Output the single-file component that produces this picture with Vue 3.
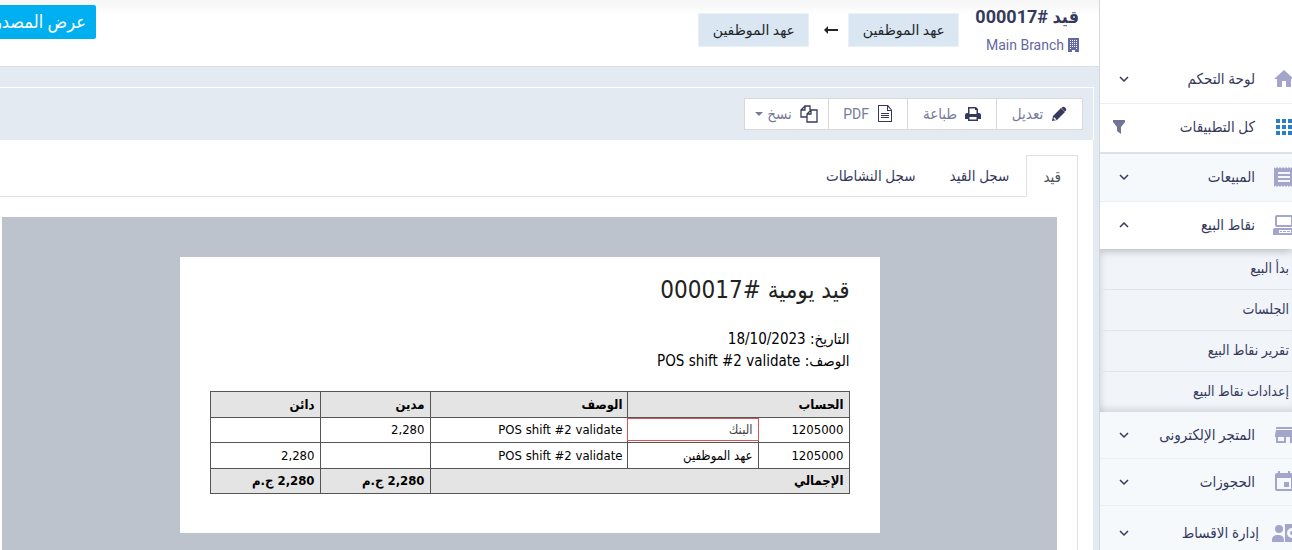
<script setup>
import { ref } from 'vue'

const activeTab = ref('entry')

const ICONS = {
  home: 'M10 20v-6h4v6h5v-8h3L12 3 2 12h3v8z',
  apps: 'M4 8h4V4H4zM10 8h4V4h-4zM16 8h4V4h-4zM4 14h4v-4H4zM10 14h4v-4h-4zM16 14h4v-4h-4zM4 20h4v-4H4zM10 20h4v-4h-4zM16 20h4v-4h-4z',
  receipt: 'M18 17H6v-2h12v2zm0-4H6v-2h12v2zm0-4H6V7h12v2zM2 22l1.500-1.500L5 22l1.500-1.500L8 22l1.500-1.500L11 22l1.500-1.500L14 22l1.500-1.500L17 22l1.500-1.500L20 22l1.500-1.500V3.500L20 2l-1.500 1.500L17 2l-1.500 1.500L14 2l-1.500 1.500L11 2 9.500 3.500 8 2 6.500 3.500 5 2 3.500 3.500 2 2z',
  pos: 'M5 2h14a2 2 0 0 1 2 2v8a2 2 0 0 1-2 2H5a2 2 0 0 1-2-2V4a2 2 0 0 1 2-2zm0 2v8h14V4zM3 15h18a2 2 0 0 1 2 2v5H1v-5a2 2 0 0 1 2-2zm4 2v3h12v-3zm1 1h2v1H8zm3 0h3v1h-3zm4 0h3v1h-3z',
  store: 'M20 4H4v2h16V4zm1 10v-2l-1-5H4l-1 5v2h1v6h10v-6h4v6h2v-6h1zm-9 4H6v-4h6v4z',
  event: 'M17 12h-5v5h5v-5zM16 1v2H8V1H6v2H5c-1.100 0-2 .9-2 2v14c0 1.100.9 2 2 2h14c1.100 0 2-.9 2-2V5c0-1.100-.9-2-2-2h-1V1h-2zm3 18H5V8h14v11z',
  installment: 'M7 4a4 4 0 1 1 0 8 4 4 0 0 1 0-8zM0 21v-2c0-4 3-5 6-5s6 1 6 5v2zM13 3h11v18H13zM20 7a5 5 0 1 0 0 10zm0 3a2 2 0 1 0 0 4z',
}

const topItems = [
  { label: 'لوحة التحكم', icon: 'home', side: 'down' },
  { label: 'كل التطبيقات', icon: 'apps', side: 'filter', kind: 'apps' },
  { label: 'المبيعات', icon: 'receipt', side: 'down', kind: 'tinted' },
  { label: 'نقاط البيع', icon: 'pos', side: 'up', kind: 'open' },
]

const subItems = ['بدأ البيع', 'الجلسات', 'تقرير نقاط البيع', 'إعدادات نقاط البيع']

const bottomItems = [
  { label: 'المتجر الإلكترونى', icon: 'store', side: 'down', kind: 'tinted' },
  { label: 'الحجوزات', icon: 'event', side: 'down', kind: 'tinted' },
  { label: 'إدارة الاقساط', icon: 'installment', side: 'down', kind: 'tinted tall' },
]

const SIDE_ICONS = {
  down: 'M4 6l4 4 4-4',
  up: 'M4 10l4-4 4 4',
}

const tabs = [
  { id: 'entry', label: 'قيد' },
  { id: 'log', label: 'سجل القيد' },
  { id: 'activity', label: 'سجل النشاطات' },
]

const rows = [
  { code: '1205000', account: 'البنك', desc: 'POS shift #2 validate', debit: '2,280', credit: '', marked: true },
  { code: '1205000', account: 'عهد الموظفين', desc: 'POS shift #2 validate', debit: '', credit: '2,280' },
]
</script>

<template>
  <div class="app" dir="rtl" lang="ar">
    <nav class="sidebar">
      <button v-for="item in topItems" :key="item.icon" type="button" class="nav-item" :class="item.kind">
        <svg class="nav-icon" viewBox="0 0 20 24"><path fill-rule="evenodd" :d="ICONS[item.icon]" /></svg>
        <span class="nav-label">{{ item.label }}</span>
        <svg v-if="item.side === 'filter'" class="filter" viewBox="0 0 12 14"><path d="M0 0h12v2L8 7v7l-4-3V7L0 2z" /></svg>
        <svg v-else class="chevron" viewBox="0 0 16 16"><path :d="SIDE_ICONS[item.side]" /></svg>
      </button>

      <div class="submenu">
        <a v-for="label in subItems" :key="label" href="#" class="sub-item">{{ label }}</a>
      </div>

      <button v-for="item in bottomItems" :key="item.icon" type="button" class="nav-item" :class="item.kind">
        <svg class="nav-icon" viewBox="0 0 20 24"><path fill-rule="evenodd" :d="ICONS[item.icon]" /></svg>
        <span class="nav-label">{{ item.label }}</span>
        <svg class="chevron" viewBox="0 0 16 16"><path :d="SIDE_ICONS[item.side]" /></svg>
      </button>
    </nav>

    <main class="main">
      <header class="page-head">
        <div class="title-block">
          <h1>قيد #000017</h1>
          <p class="branch">
            <svg class="building" viewBox="0 0 11 14">
              <path fill-rule="evenodd" d="M0 0h11v14H7v-2H4v2H0zM2 2v1h1V2zm2 0v1h1V2zm2 0v1h1V2zm2 0v1h1V2zM2 4v1h1V4zm2 0v1h1V4zm2 0v1h1V4zm2 0v1h1V4zM2 6v1h1V6zm2 0v1h1V6zm2 0v1h1V6zm2 0v1h1V6zM2 8v1h1V8zm2 0v1h1V8zm2 0v1h1V8zm2 0v1h1V8zM2 10v1h1v-1zm6 0v1h1v-1z" />
            </svg>
            <span>Main Branch</span>
          </p>
        </div>
        <div class="flow">
          <a href="#" class="chip">عهد الموظفين</a>
          <svg class="arrow" viewBox="0 0 14 8"><path d="M0 4l4-4v3h10v2H4v3z" /></svg>
          <a href="#" class="chip">عهد الموظفين</a>
        </div>
        <button type="button" class="source-btn">عرض المصدر</button>
      </header>

      <div class="toolbar">
        <div class="btn-group">
          <button type="button" class="tool edit">
            <svg viewBox="0 0 16 16"><path fill-rule="evenodd" d="M1 15l1-5 8-8 4 4-8 8zM3 11l-.5 1.500 1.500 1.500 1.500-.5zM11 1.500C12 .5 13 .5 14 1.500l.5.500c1 1 1 2 0 3L14 5.500 10.500 2z" /></svg>
            <span>تعديل</span>
          </button>
          <button type="button" class="tool print">
            <svg viewBox="0 0 16 16"><path fill-rule="evenodd" d="M3 1h8l2 2v4h1a2 2 0 0 1 2 2v4h-3v2H3v-2H0V9a2 2 0 0 1 2-2h1zm1.500 1.500V8h7V4H10V2.500zM4.500 11v2.500h7V11z" /></svg>
            <span>طباعة</span>
          </button>
          <button type="button" class="tool pdf">
            <svg viewBox="0 0 16 18"><path fill-rule="evenodd" d="M1 0h10l4 5v12H1zM2 1v15h12V6h-4V1zm9 1v3h3zM4 8h8v1H4zm0 2h8v1H4zm0 2h8v1H4z" /></svg>
            <span>PDF</span>
          </button>
          <button type="button" class="tool copy">
            <svg viewBox="0 0 18 18"><path class="line" d="M7 12H1V5l4-4h5v4M1 5h4V1M7 9v8h10V5h-6zM7 9h4V5" /></svg>
            <span>نسخ</span>
            <i class="caret"></i>
          </button>
        </div>
      </div>

      <section class="content">
        <div class="tabs" role="tablist">
          <button
            v-for="tab in tabs"
            :key="tab.id"
            type="button"
            role="tab"
            class="tab"
            :class="{ active: tab.id === activeTab }"
            :aria-selected="tab.id === activeTab"
            @click="activeTab = tab.id"
          >{{ tab.label }}</button>
        </div>

        <div class="panel">
          <div class="preview">
            <article class="paper">
              <h2>قيد يومية #000017</h2>
              <p>التاريخ: 18/10/2023</p>
              <p>الوصف: POS shift #2 validate</p>

              <table>
                <colgroup>
                  <col class="col-code" />
                  <col class="col-account" />
                  <col class="col-desc" />
                  <col class="col-amount" />
                  <col class="col-amount" />
                </colgroup>
                <thead>
                  <tr>
                    <th colspan="2">الحساب</th>
                    <th>الوصف</th>
                    <th>مدين</th>
                    <th>دائن</th>
                  </tr>
                </thead>
                <tbody>
                  <tr v-for="(row, i) in rows" :key="i">
                    <td>{{ row.code }}</td>
                    <td :class="{ marked: row.marked }">{{ row.account }}</td>
                    <td>{{ row.desc }}</td>
                    <td>{{ row.debit }}</td>
                    <td>{{ row.credit }}</td>
                  </tr>
                </tbody>
                <tfoot>
                  <tr>
                    <th colspan="3">الإجمالي</th>
                    <th>2,280 ج.م</th>
                    <th>2,280 ج.م</th>
                  </tr>
                </tfoot>
              </table>
            </article>
          </div>
        </div>
      </section>
    </main>
  </div>
</template>

<style>
body {
  background: #e3eaf2;
}
</style>

<style scoped>
* {
  box-sizing: border-box;
}

.app {
  display: flex;
  height: 100vh;
  overflow: hidden;
  font-family: Roboto, "DejaVu Sans Condensed", "DejaVu Sans", sans-serif;
  font-size: 14px;
  color: #353a5c;
}

button {
  font: inherit;
  color: inherit;
  cursor: pointer;
}

h1, h2, p {
  margin: 0;
}

a {
  color: inherit;
  text-decoration: none;
}

/* Sidebar */
.sidebar {
  flex: 0 0 193px;
  padding-top: 55px;
  background: #fff;
  border-left: 1px solid #d3d6dc;
}

.nav-item {
  display: flex;
  align-items: center;
  width: 100%;
  height: 49px;
  padding: 0 0 0 16px;
  border: 0;
  border-bottom: 1px solid #eceef1;
  background: #fff;
  font-size: 15px;
  text-align: right;
}

.nav-item.apps {
  height: 50px;
  padding-bottom: 2px;
  border-bottom: 2px solid #e0e1e8;
}

.nav-item.tinted {
  height: 48px;
  padding-bottom: 2px;
  background: #f5f9fc;
}

.nav-item.open {
  position: relative;
  height: 47px;
  padding-bottom: 2px;
  border-bottom: 0;
  box-shadow: 0 2px 8px rgba(0, 0, 0, 0.25);
  clip-path: inset(0 0 -12px 0);
}

.submenu ~ .nav-item.tinted {
  height: 47px;
  padding-bottom: 0;
}

.submenu ~ .nav-item.tall {
  height: 54px;
}

.nav-icon {
  flex: none;
  width: 20px;
  height: 24px;
  margin-left: 17px;
  fill: #a3a5cb;
}

.tall .nav-icon {
  margin-left: 13px;
}

.apps .nav-icon {
  fill: #2780c3;
}

.nav-label {
  flex: 1;
  white-space: nowrap;
}

.chevron {
  width: 16px;
  height: 16px;
  fill: none;
  stroke: #353a5c;
  stroke-width: 1.5;
}

.filter {
  width: 12px;
  height: 14px;
  margin-left: -3px;
  fill: #6f7594;
}

.submenu {
  background: #f1f4f9;
  box-shadow: inset 0 -8px 8px -6px rgba(0, 0, 0, 0.15), inset 8px 0 8px -8px rgba(0, 0, 0, 0.15);
}

.sub-item {
  display: flex;
  align-items: center;
  height: 41px;
  padding: 0 3px 2px 0;
  border-bottom: 1px solid #e1e5ea;
  font-size: 14px;
}

.sub-item:last-child {
  height: 40px;
  border-bottom: 0;
}

/* Page header */
.main {
  display: flex;
  flex: 1;
  flex-direction: column;
  min-width: 0;
}

.page-head {
  display: flex;
  align-items: flex-start;
  height: 67px;
  padding-right: 20px;
  border-bottom: 1px solid #dbe1e6;
  background: linear-gradient(#f6f6f6, #fff 16px);
}

.title-block {
  padding-top: 4px;
}

h1 {
  font-size: 18px;
  line-height: 26px;
}

.branch {
  display: flex;
  align-items: center;
  gap: 4px;
  margin-top: 6px;
  color: #6468a3;
  line-height: 18px;
}

.building {
  width: 11px;
  height: 14px;
  fill: #6468a3;
}

.flow {
  display: flex;
  align-items: center;
  gap: 10px;
  margin: 13px 16px 0 0;
}

.chip {
  width: 111px;
  border: 1px solid #e9f1f8;
  background: #dae6f1;
  color: #212529;
  font-family: Roboto, "DejaVu Sans", sans-serif;
  line-height: 32px;
  text-align: center;
}

.arrow {
  width: 14px;
  height: 8px;
  margin-left: 5px;
  fill: #212529;
}

.source-btn {
  flex: none;
  height: 34px;
  margin: 5px auto 0 -16px;
  padding: 0 10px;
  border: 0;
  border-radius: 2px;
  background: #00aff0;
  color: #fff;
  font-size: 18px;
  line-height: 24px;
  white-space: nowrap;
}

/* Toolbar */
.toolbar {
  margin: 20px 5px 0 0;
  padding: 10px 10px 10px 0;
  border-top: 1px solid #fff;
  border-right: 1px solid #fff;
}

.btn-group {
  display: flex;
}

.tool {
  display: flex;
  align-items: center;
  justify-content: center;
  gap: 8px;
  height: 32px;
  padding: 0;
  border: 1px solid #d9d9d9;
  background: #fff;
  color: #767b9c;
  font-size: 15px;
}

.tool + .tool {
  border-right-width: 0;
}

.tool svg {
  width: 16px;
  height: 16px;
  fill: #353a5c;
}

.tool.pdf {
  font-size: 14px;
}

.tool.pdf svg,
.tool.copy svg {
  height: 18px;
}

.tool.copy svg {
  width: 18px;
}

.tool .line {
  fill: none;
  stroke: #353a5c;
  stroke-width: 1.3;
}

.edit { width: 87px; }
.print { width: 89px; }
.pdf { width: 79px; }
.copy { width: 84px; }

.caret {
  margin-right: -4px;
  border: 4px solid transparent;
  border-top-color: #767b9c;
  border-bottom: 0;
}

/* Tabs and document preview */
.content {
  display: flex;
  flex: 1;
  flex-direction: column;
  margin-right: 6px;
  padding: 15px 15px 0 0;
  background: #fff;
}

.tabs {
  display: flex;
  border-bottom: 1px solid #dee2e6;
}

.tab {
  height: 41px;
  padding: 0 16px;
  border: 1px solid transparent;
  border-bottom: 0;
  background: none;
  font-size: 15px;
}

.tab.active {
  height: 42px;
  margin-bottom: -1px;
  border-color: #dee2e6;
  background: #fff;
  color: #495057;
}

.panel {
  display: flex;
  flex: 1;
  padding: 20px 20px 0 2px;
  border-right: 1px solid #dee2e6;
}

.preview {
  flex: 1;
  padding: 40px 20px 0;
  background: #bcc3cd;
}

.paper {
  max-width: 700px;
  margin: 0 auto;
  padding: 17px 30px 39px;
  background: #fff;
  color: #000;
  font-family: "DejaVu Sans Condensed", "DejaVu Sans", sans-serif;
}

h2 {
  margin-bottom: 21px;
  color: #222;
  font-size: 24px;
  font-weight: 400;
  line-height: 33px;
}

.paper p {
  font-size: 15px;
  line-height: 22px;
}

table {
  width: 100%;
  margin-top: 19px;
  border-collapse: collapse;
  table-layout: fixed;
  font-size: 13px;
}

th,
td {
  height: 25px;
  padding: 0 5px;
  border: 1px solid #555;
  line-height: 24px;
  text-align: right;
}

th {
  background: #e4e4e4;
}

thead th,
tbody tr:last-child td {
  height: 26px;
}

.col-code { width: 91px; }
.col-account { width: 130px; }
.col-amount { width: 110px; }

.marked {
  position: relative;
  color: #444;
}

.marked::after {
  content: "";
  position: absolute;
  inset: 0 -1px 1px;
  border: 1px solid #dd5555;
}
</style>
